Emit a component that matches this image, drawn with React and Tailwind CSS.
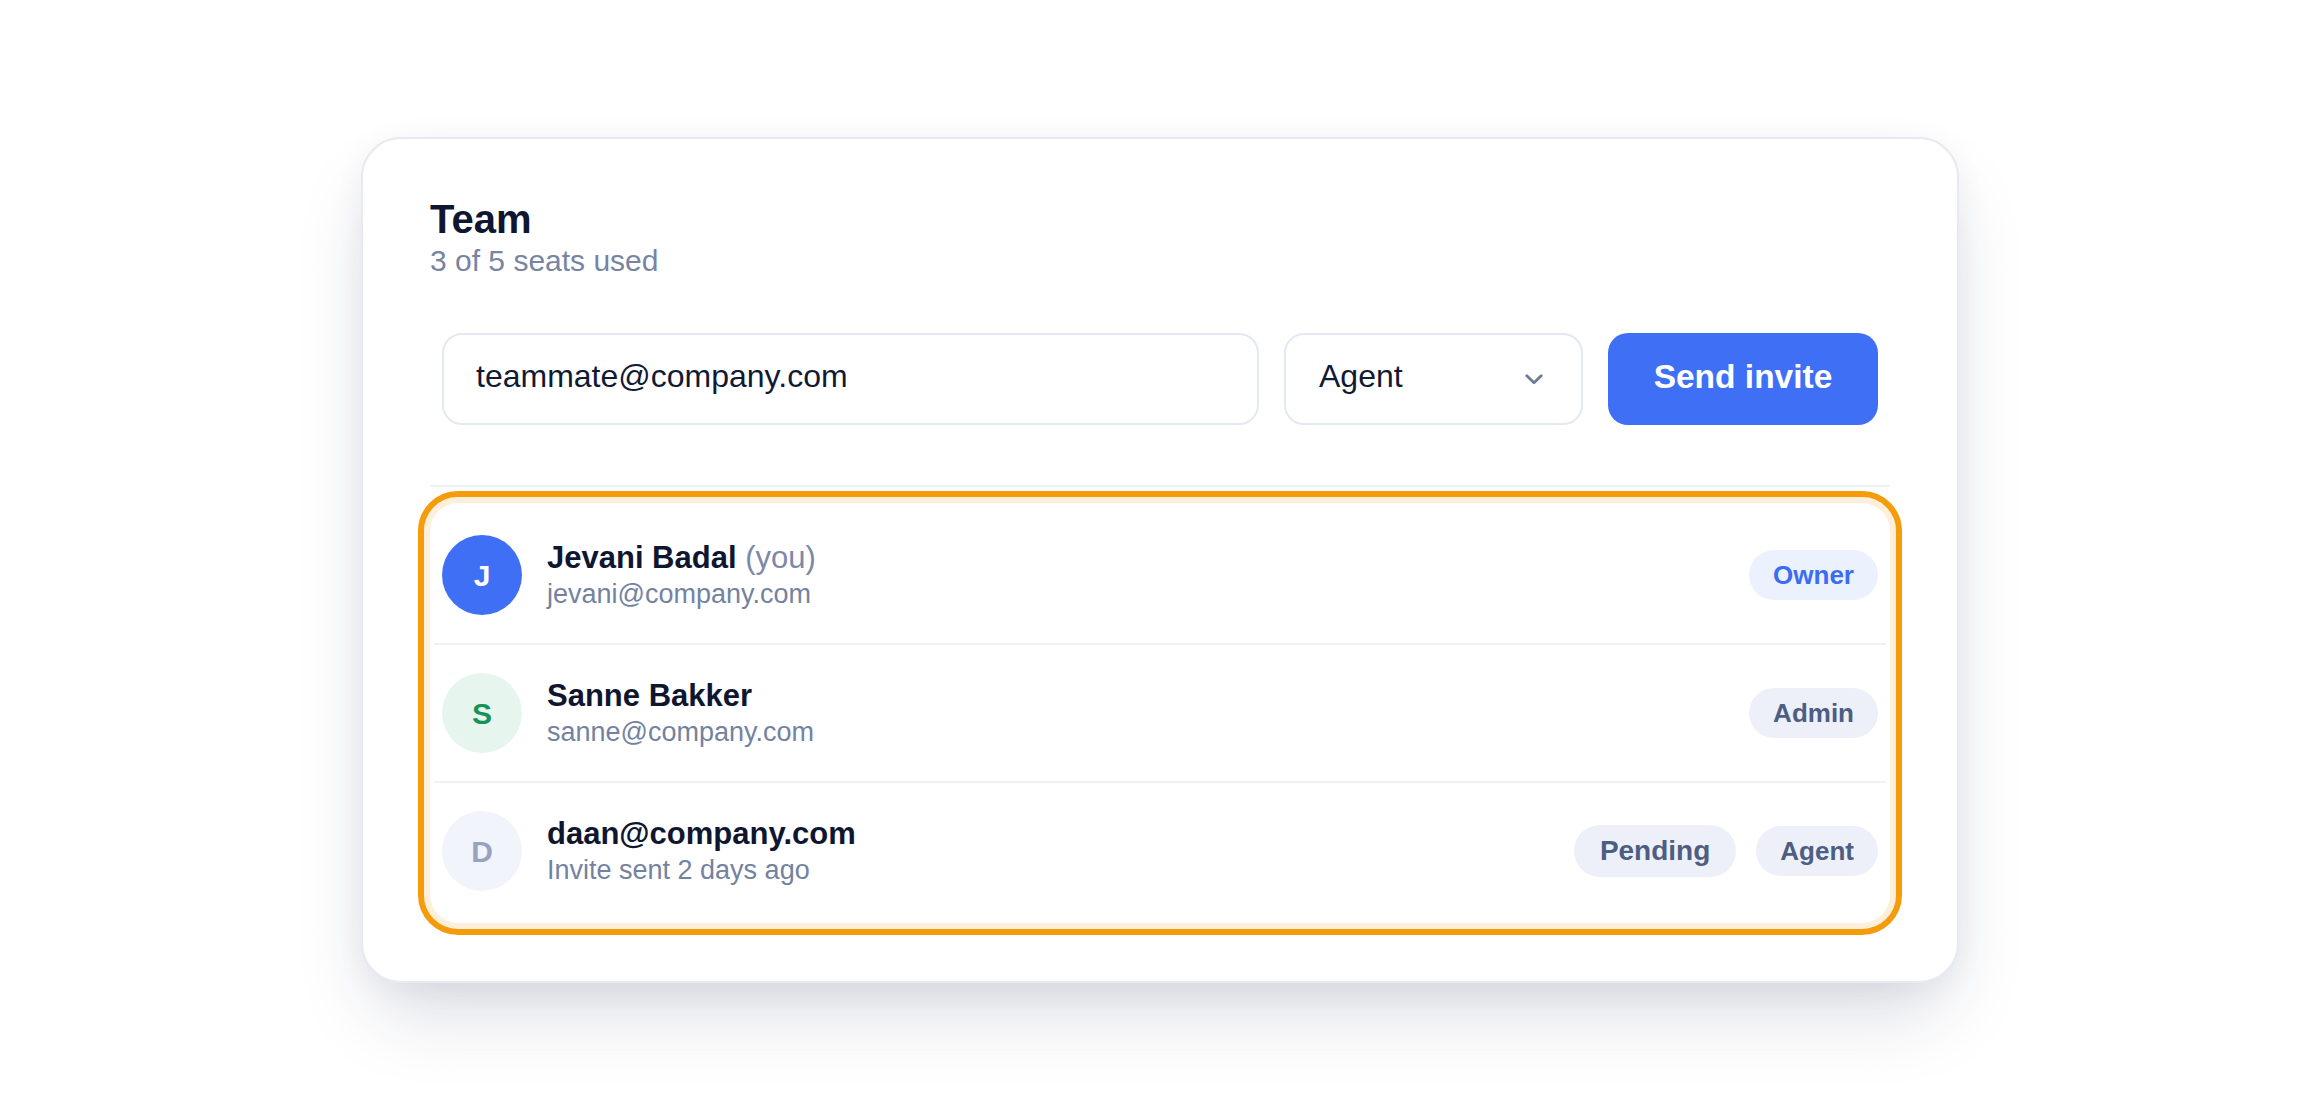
const members = [
  {
    initial: "J",
    name: "Jevani Badal",
    you: true,
    sub: "jevani@company.com",
    avatar: "bg-[#3f6ff5] text-white",
    badges: [{ label: "Owner", tone: "blue" }],
  },
  {
    initial: "S",
    name: "Sanne Bakker",
    sub: "sanne@company.com",
    avatar: "bg-[#e6f6ee] text-[#17935a]",
    badges: [{ label: "Admin" }],
  },
  {
    initial: "D",
    name: "daan@company.com",
    sub: "Invite sent 2 days ago",
    avatar: "bg-[#f2f4fb] text-[#97a2bf]",
    badges: [{ label: "Pending", status: true }, { label: "Agent" }],
  },
];

function Badge({ label, tone, status }) {
  const color =
    tone === "blue" ? "bg-[#ecf1fe] text-[#3b6cf4]" : "bg-[#edf0f8] text-[#4e5d82]";
  const size = status ? "h-[52px] px-[26px] text-[28px]" : "h-[50px] px-[24px] text-[26px]";
  return (
    <span className={`flex items-center rounded-full font-bold leading-none ${color} ${size}`}>
      {label}
    </span>
  );
}

function MemberRow({ m, last }) {
  return (
    <li
      className={`flex items-center gap-[25px] px-2 py-[28px] ${
        last ? "" : "border-b-2 border-[#eef1f7]"
      }`}
    >
      <span
        className={`flex h-20 w-20 shrink-0 items-center justify-center rounded-full text-[30px] font-bold ${m.avatar}`}
      >
        {m.initial}
      </span>
      <div className="flex-1">
        <div className="text-[31px] leading-[36px] font-bold text-[#0f1630]">
          {m.name}
          {m.you && <span className="font-normal text-[#7c89a7]"> (you)</span>}
        </div>
        <div className="mt-[2px] text-[27px] leading-[32px] text-[#7482a1]">{m.sub}</div>
      </div>
      <div className="flex items-center gap-5">
        {m.badges.map((b) => (
          <Badge key={b.label} {...b} />
        ))}
      </div>
    </li>
  );
}

export default function App() {
  return (
    <div
      className="flex min-h-screen w-full items-center justify-center bg-white"
      style={{ fontFamily: '"Liberation Sans", Arial, sans-serif' }}
    >
      <div className="w-[1598px] rounded-[40px] border-2 border-[#e7eaf3] bg-white px-[67px] pt-[56px] pb-[58px] shadow-[0_40px_80px_-16px_rgba(30,41,82,0.18),0_6px_30px_rgba(30,41,82,0.05)]">
        <h1 className="text-[40px] leading-[48px] font-bold text-[#0f1630]">Team</h1>
        <p className="text-[30px] leading-[36px] text-[#7784a2]">3 of 5 seats used</p>

        <div className="mt-[54px] flex gap-[25px] px-3">
          <div className="flex h-[92px] flex-1 items-center rounded-[20px] border-2 border-[#e4e8f3] pb-[6px] pl-[32px] text-[32px] text-[#111a33]">
            teammate@company.com
          </div>
          <div className="flex h-[92px] w-[299px] items-center justify-between rounded-[20px] border-2 border-[#e4e8f3] pl-[33px] pr-[38px] text-[32px] text-[#111a33]">
            <span className="pb-[6px]">Agent</span>
            <svg width="18" height="11" viewBox="0 0 18 11" fill="none">
              <path
                d="M1.8 1.8 9 8.8l7.2-7"
                stroke="#6f7b96"
                strokeWidth="2.8"
                strokeLinecap="round"
                strokeLinejoin="round"
              />
            </svg>
          </div>
          <button className="h-[92px] w-[270px] rounded-[20px] bg-[#3e6ff4] pb-[3px] text-[33.5px] font-bold text-white">
            Send invite
          </button>
        </div>

        <div className="mt-[60px] h-[2px] bg-[#eef1f6]" />

        <ul className="mt-4 rounded-[28px] p-1 shadow-[0_0_0_6px_#fdefd9] outline-6 outline-offset-6 outline-[#f49c0c]">
          {members.map((m, i) => (
            <MemberRow key={m.initial} m={m} last={i === members.length - 1} />
          ))}
        </ul>
      </div>
    </div>
  );
}
